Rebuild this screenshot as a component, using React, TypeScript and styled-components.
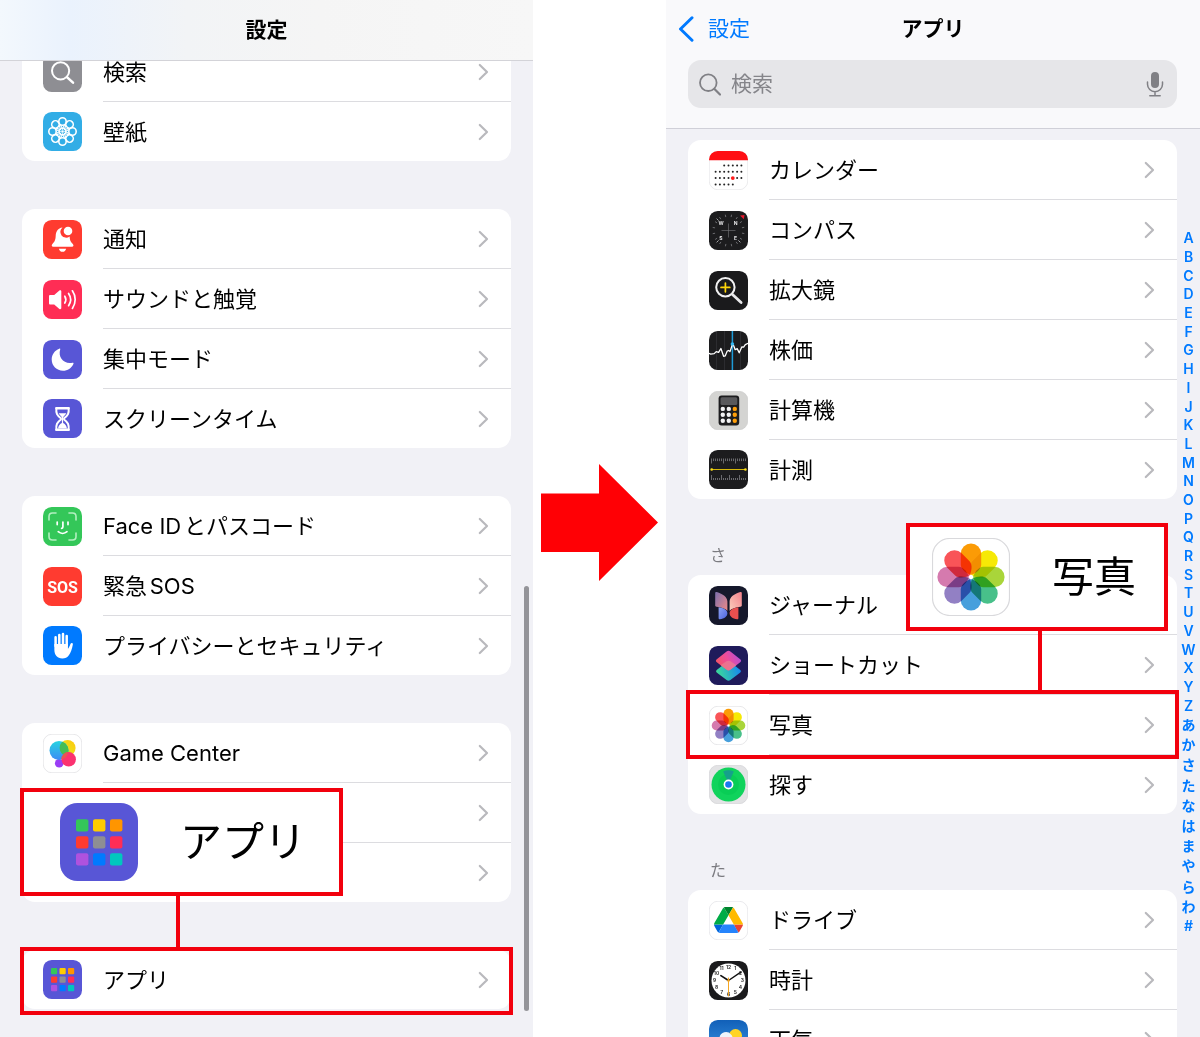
import React from "react";
import styled, { createGlobalStyle, css } from "styled-components";

const GlobalStyle = createGlobalStyle`
  *, *::before, *::after { box-sizing: border-box; }
  body {
    margin: 0;
    background: #fff;
    color: #000;
    font-family: Inter, "Noto Sans CJK JP", sans-serif;
    font-size: 21px;
    line-height: 30px;
  }
  ul, h1, h2 { margin: 0; padding: 0; }
  ul { list-style: none; }
  a { color: inherit; text-decoration: none; }
  button { font: inherit; color: inherit; background: none; border: 0; padding: 0; }
`;

const HIGHLIGHT = "#f2000d";
const BLUE = "#007aff";

/* ---------- layout ---------- */

const Guide = styled.main`
  display: grid;
  grid-template-columns: 533fr 133fr 534fr;
  height: 100vh;
  overflow: hidden;
`;

const Phone = styled.section`
  position: relative;
  display: flex;
  flex-direction: column;
  min-width: 0;
  min-height: 0;
  overflow: hidden;
  background: #f1f1f6;
`;

const Between = styled.div`
  display: flex;
  align-items: center;
  justify-content: center;
  padding-top: 8px;
`;

const TitleBar = styled.header`
  position: relative;
  z-index: 1;
  display: flex;
  flex: none;
  align-items: center;
  justify-content: center;
  height: 61px;
  border-bottom: 1px solid #d3d3d8;
  background: linear-gradient(90deg, #f3f8fd 0, #eaf2fd 13%, #f2f4f6 35%, #f5f5f5 60%, #f7f7f7 100%);
`;

const Title = styled.h1`
  font-size: 21px;
  font-weight: 700;
  line-height: 30px;
  text-align: center;
`;

const NavHeader = styled.header`
  flex: none;
  height: 129px;
  padding-top: 14px;
  border-bottom: 1px solid #d0d0d8;
  background: #f9f9fb;
`;

const NavRow = styled.div`
  display: grid;
  grid-template-columns: 1fr auto 1fr;
  align-items: center;
  height: 30px;
  padding: 0 12px;
`;

const BackButton = styled.button`
  display: flex;
  align-items: center;
  gap: 14px;
  color: ${BLUE};
`;

const SearchBox = styled.label`
  display: flex;
  align-items: center;
  gap: 10px;
  height: 48px;
  margin: 16px 23px 0 22px;
  padding: 0 12px 0 11px;
  border-radius: 13px;
  background: #e6e6e9;
`;

const SearchInput = styled.input`
  flex: 1;
  min-width: 0;
  padding: 0;
  border: 0;
  outline: 0;
  background: transparent;
  font: inherit;
  &::placeholder { color: #85858a; opacity: 1; }
`;

const SettingsBody = styled.div`
  display: flex;
  flex-direction: column;
  gap: 48px;
  margin-top: -19px;
  padding: 0 22px;
`;

const AppsBody = styled.div`
  display: grid;
  grid-template-columns: 1fr 23px;
  align-items: start;
  padding: 11px 0 0 22px;
`;

const Scrollbar = styled.div`
  position: absolute;
  top: 586px;
  right: 4px;
  width: 5px;
  height: 425px;
  border-radius: 3px;
  background: #949499;
`;

/* ---------- lists ---------- */

const Card = styled.ul`
  border-radius: 13px;
  background: #fff;
`;

const SectionTitle = styled.h2`
  height: 76px;
  padding: 46px 22px 0;
  color: #7b7b80;
  font-size: 16px;
  font-weight: 400;
  line-height: 20px;
`;

const Item = styled.li`
  position: relative;
`;

const RowLink = styled.a`
  display: flex;
  align-items: center;
  gap: 21px;
  padding-left: 21px;
`;

const RowMain = styled.span<{ $divided: boolean; $inset: boolean }>`
  display: flex;
  flex: 1;
  align-items: center;
  justify-content: space-between;
  height: ${(p) => (p.$divided ? 60 : 59)}px;
  margin-left: ${(p) => (p.$inset ? 60 : 0)}px;
  padding-right: 22px;
  ${(p) => p.$divided && css`border-bottom: 1px solid #dcdce0;`}
`;

const Label = styled.span`
  font-size: 22px;
  text-autospace: normal;
  white-space: nowrap;
`;

const Svg = styled.svg<{ $size?: number }>`
  display: block;
  flex: none;
  width: ${(p) => p.$size ?? 39}px;
  height: ${(p) => p.$size ?? 39}px;
`;

const Glyph = styled.svg`
  display: block;
  flex: none;
`;

/* ---------- annotations ---------- */

const Highlight = styled.span<{ $shift: number }>`
  position: absolute;
  inset: ${(p) => -p.$shift}px -2px ${(p) => p.$shift - 9}px;
  border: 4px solid ${HIGHLIGHT};
  pointer-events: none;
`;

const Callout = styled.div<{ $side: "left" | "right"; $width: number; $rise: number; $pad: number; $stem: number }>`
  position: absolute;
  z-index: 2;
  bottom: calc(100% + ${(p) => p.$rise}px);
  ${(p) => (p.$side === "left" ? "left: -2px;" : "right: 9px;")}
  display: flex;
  align-items: center;
  gap: 42px;
  width: ${(p) => p.$width}px;
  height: 108px;
  padding-left: ${(p) => p.$pad}px;
  border: 4px solid ${HIGHLIGHT};
  background: #fff;
  font-size: 42px;
  line-height: 60px;
  &::after {
    content: "";
    position: absolute;
    top: calc(100% + 4px);
    left: ${(p) => p.$stem}px;
    width: 4px;
    height: ${(p) => p.$rise - 1}px;
    background: ${HIGHLIGHT};
  }
`;

/* ---------- index ---------- */

const IndexNav = styled.nav`
  margin-top: 89px;
  color: ${BLUE};
  font-size: 14px;
  font-weight: 600;
  line-height: 18px;
  text-align: center;
`;

const IndexGroup = styled.div<{ $height: number }>`
  display: grid;
  grid-auto-rows: 1fr;
  align-items: center;
  height: ${(p) => p.$height}px;
`;

/* ---------- drawings ---------- */

type IconProps = { size?: number };

const Tile = ({ size, fill, border, children }: { size?: number; fill: string; border?: string; children: React.ReactNode }) => (
  <Svg $size={size} viewBox="0 0 39 39" aria-hidden="true">
    <rect x={border ? 0.25 : 0} y={border ? 0.25 : 0} width={border ? 38.5 : 39} height={border ? 38.5 : 39} rx="8.7" fill={fill} stroke={border} strokeWidth={border ? 0.6 : 0} />
    {children}
  </Svg>
);

const SearchTile = () => (
  <Tile fill="#8e8e93">
    <g fill="none" stroke="#fff" strokeLinecap="round">
      <circle cx="17.6" cy="17.8" r="8.6" strokeWidth="2" />
      <path d="M24.2 24.4 30 29.6" strokeWidth="2.6" />
    </g>
  </Tile>
);

const WallpaperTile = () => (
  <Tile fill="#32ade6">
    <g fill="none" stroke="#fff" transform="translate(19.5 19.5)">
      {[0, 45, 90, 135, 180, 225, 270, 315].map((a) => (
        <g key={a} transform={`rotate(${a})`}>
          <circle cy="-10" r="3.7" strokeWidth="1.6" />
          <path d="M-2.200-7 0-2.600 2.200-7" strokeWidth="1.100" />
        </g>
      ))}
      <circle r="3.4" strokeWidth="1" />
      <circle r="1.2" fill="#fff" stroke="none" />
    </g>
  </Tile>
);

const BellTile = () => (
  <Tile fill="#ff3b30">
    <path fill="#fff" d="M19.5 7.4c-4.6.5-6.6 4-6.8 8.4-.2 4.400-1 5.700-3.300 8.200-1.100 1.200-.8 2.800.8 2.800h18.800c1.600 0 1.900-1.600.8-2.800-2.100-2.300-3-3.700-3.200-7.600a5.700 5.700 0 0 1-7.100-9Z" />
    <circle cx="25" cy="11" r="4.300" fill="#fff" />
    <path fill="#fff" d="M15.900 28.700h7.200c-.4 2-1.700 3.100-3.600 3.100s-3.200-1.100-3.600-3.100Z" />
  </Tile>
);

const SoundTile = () => (
  <Tile fill="#ff2d55">
    <path fill="#fff" d="M6 16.200c0-.8.5-1.300 1.300-1.300h3.900l5.200-4.400c.9-.7 1.900-.3 1.900.8v16.800c0 1.100-1 1.500-1.900.8l-5.200-4.400H7.300c-.8 0-1.300-.5-1.300-1.300Z" />
    <g fill="none" stroke="#fff" strokeWidth="1.700" strokeLinecap="round">
      <path d="M21.800 16.200c1.300 2.100 1.300 4.700 0 6.800" />
      <path d="M25.600 13.500c2.500 3.700 2.500 8.500 0 12.200" />
      <path d="M29.400 10.800c3.700 5.300 3.700 12.300 0 17.600" />
    </g>
  </Tile>
);

const MoonTile = () => (
  <Tile fill="#5856d6">
    <path fill="#fff" d="M16.300 8.700c.6-.3 1.200.2.900.9-2.400 7.600 3.400 14.900 12.200 13.200.9-.2 1.400.4 1 1.100C28.500 28 24.600 30.700 20 30.700 13.600 30.700 8.700 25.900 8.700 19.500c0-4.900 3-9.200 7.600-10.800Z" />
  </Tile>
);

const HourglassTile = () => (
  <Tile fill="#5856d6">
    <path fill="none" stroke="#fff" strokeWidth="2" strokeLinejoin="round" d="M13.400 9h12.200c.6 5.500-.7 7.300-4.500 10.300v1.200c3.800 3 5.100 4.900 4.500 10.500H13.400c-.6-5.600.7-7.500 4.500-10.500v-1.200c-3.800-3-5.100-4.800-4.500-10.300Z" />
    <path fill="#fff" d="M15.600 14.300h7.800c-.8 1.600-2.300 2.700-3.300 3.900v5.800c1.900.9 3.400 2.500 3.900 5.500h-9c.5-3 2-4.600 3.900-5.500v-5.800c-1-1.200-2.500-2.300-3.300-3.900Z" />
    <path stroke="#fff" strokeWidth="2.600" strokeLinecap="round" d="M13.500 9.300h12M13.500 30.700h12" />
  </Tile>
);

const FaceTile = () => (
  <Tile fill="#34c759">
    <path fill="none" stroke="#b3f0c1" strokeWidth="1.600" strokeLinecap="round" d="M6 13V9.500C6 7.300 7.300 6 9.500 6H13M26 6h3.500C31.700 6 33 7.300 33 9.500V13M33 26v3.500c0 2.200-1.300 3.500-3.500 3.500H26M13 33H9.500C7.300 33 6 31.700 6 29.500V26" />
    <path fill="none" stroke="#fff" strokeWidth="1.700" strokeLinecap="round" d="M14.200 15v2.600M25 15v2.600M19.900 15v5c0 .9-.5 1.300-1.300 1.300M15.200 24.700c2.500 2.100 6.300 2.100 8.800 0" />
  </Tile>
);

const SosTile = () => (
  <Tile fill="#ff3b30">
    <text x="19.500" y="25.500" textAnchor="middle" fill="#fff" fontFamily="Roboto, sans-serif" fontWeight="700" fontSize="16">SOS</text>
  </Tile>
);

const HandTile = () => (
  <Tile fill="#007aff">
    <path fill="none" stroke="#fff" strokeWidth="2.500" strokeLinecap="round" d="M12.600 20v-8.700M16.300 19V8.900M20 19V8M23.700 19V10" />
    <path fill="#fff" d="M11.350 18h13.600v4.700c.9-.9 1.700-2.600 2.500-4.700.6-1.500 2.700-1.200 2.400.5-.8 4.700-2.200 8.300-4 10.700-1.500 2.100-3.700 3.200-6.500 3.200-5.100 0-8-3.200-8-8.900Z" />
  </Tile>
);

const GameTile = () => (
  <Tile fill="#fff" border="#d9d9dc">
    <defs>
      <linearGradient id="gcBlue" x1="0" y1="0" x2="0" y2="1"><stop offset="0" stopColor="#27d3e0" /><stop offset="1" stopColor="#3b8cf5" /></linearGradient>
      <linearGradient id="gcYellow" x1="1" y1="0" x2="0" y2="1"><stop offset="0" stopColor="#ffc60a" /><stop offset=".5" stopColor="#f0dc19" /><stop offset="1" stopColor="#1fb25a" /></linearGradient>
      <clipPath id="gcClip"><circle cx="16" cy="16.500" r="9.500" /></clipPath>
    </defs>
    <circle cx="16.200" cy="29.300" r="4.300" fill="#9a3df5" />
    <circle cx="24.600" cy="14" r="8" fill="url(#gcYellow)" />
    <circle cx="16" cy="16.500" r="9.500" fill="url(#gcBlue)" />
    <circle cx="24.600" cy="14" r="8" fill="#45bd55" clipPath="url(#gcClip)" />
    <circle cx="25.700" cy="25.300" r="7.200" fill="#fb3270" />
    <circle cx="25.700" cy="25.300" r="7.200" fill="#e8554f" clipPath="url(#gcClip)" />
  </Tile>
);

const APP_COLORS = ["#34c759", "#ffcc00", "#ff9500", "#ff3b30", "#8e8e93", "#ff2d55", "#af52de", "#007aff", "#00c7be"];

const AppsTile = ({ size }: IconProps) => (
  <Tile size={size} fill="#5856d6">
    {APP_COLORS.map((c, i) => (
      <rect key={c} x={8 + (i % 3) * 8.5} y={8.1 + Math.floor(i / 3) * 8.5} width="6.200" height="6.200" rx="1" fill={c} />
    ))}
  </Tile>
);

const CALENDAR_ROWS = [[2, 6], [0, 6], [0, 6], [0, 4]];

const CalendarTile = () => (
  <Tile fill="#fff" border="#dedee0">
    <path fill="#ff0f14" d="M0 9.300V8.700A8.700 8.700 0 0 1 8.700 0h21.600A8.700 8.700 0 0 1 39 8.700v.6Z" />
    {CALENDAR_ROWS.map(([from, to], r) =>
      Array.from({ length: to - from + 1 }, (_, i) => from + i).map((c) => {
        const today = r === 2 && c === 4;
        return <circle key={`${r}-${c}`} cx={6.6 + c * 4.3} cy={14.5 + r * 6.3} r={today ? 1.9 : 1} fill={today ? "#ff1a1a" : "#222"} />;
      })
    )}
  </Tile>
);

const CompassTile = () => (
  <Tile fill="#1c1c1e">
    <g stroke="#77777b" strokeWidth=".8">
      {Array.from({ length: 16 }, (_, i) => (
        <path key={i} transform={`rotate(${i * 22.5 + 11} 19.500 19.500)`} d="M19.500 3.400v2.400" />
      ))}
      <path d="M19.500 12.500v14M12.500 19.500h14" strokeWidth=".6" />
    </g>
    <g stroke="#c9c9cc" strokeWidth=".8"><path d="m7.600 7.600 2 2M7.600 31.400l2-2M31.400 31.400l-2-2" /></g>
    <path fill="#e8182c" d="m35.500 4-.7 4.300-3.700-3.700Z" />
    <g fill="#e5e5e7" fontFamily="Inter, sans-serif" fontWeight="700" fontSize="5" textAnchor="middle">
      <text x="12.200" y="14.300">W</text>
      <text x="26.600" y="14.300">N</text>
      <text x="12" y="29">S</text>
      <text x="26.600" y="29">E</text>
    </g>
  </Tile>
);

const MagnifierTile = () => (
  <Tile fill="#1a1a1c">
    <g fill="none" strokeLinecap="round">
      <circle cx="16.400" cy="16.300" r="9.200" stroke="#f2f2f3" strokeWidth="2" />
      <path d="m23.500 23.500 8.600 8" stroke="#e8e8ea" strokeWidth="2.800" />
      <path d="M16.400 12v8.800M12 16.400h8.800" stroke="#ffd60a" strokeWidth="1.700" />
    </g>
  </Tile>
);

const StocksTile = () => (
  <Tile fill="#1c1c1e">
    <path stroke="#313135" strokeWidth=".8" d="M7.500 1v37M15.500 0v39M31.500 1v37" />
    <path stroke="#1e9bd7" strokeWidth="1.500" d="M23.400 0v39" />
    <path fill="none" stroke="#fff" strokeWidth="1.300" strokeLinejoin="round" d="m0 22.300 1.700.8 3.500-.5 2-2 2.400.8 2.300-3.900.8 2.300 1.900 5.500 1.600-.4 2-4.800 1.500-.6 1.300 1.100 2.300-6.900 1.300.8 1.600 4.200 2-1.100 2 4.200 2.700-6 1.700.4 1.700-2.600 2.700-1.300" />
    <circle cx="23.400" cy="13" r="1.800" fill="#35b8f0" />
  </Tile>
);

const CalculatorTile = () => (
  <Tile fill="#d4d4d2" border="#c9c9c9">
    <rect x="9.600" y="4.500" width="20.600" height="30" rx="3" fill="#1d1d1f" />
    <rect x="11.500" y="6.300" width="16.800" height="7.800" rx="1.500" fill="#59595c" />
    {Array.from({ length: 9 }, (_, i) => (
      <circle key={i} cx={13.8 + (i % 3) * 6} cy={17.9 + Math.floor(i / 3) * 5.9} r="2.200" fill={i % 3 === 2 ? "#ff9f0a" : "#f2f2f4"} />
    ))}
  </Tile>
);

const MeasureTile = () => (
  <Tile fill="#1c1c1e">
    <g stroke="#8d8d91" strokeWidth=".7">
      {Array.from({ length: 18 }, (_, i) => (
        <path key={i} d={`M${2.5 + i * 2} 8.500v${i % 6 === 0 ? 5 : 2.6}M${2.5 + i * 2} 30v${i % 9 === 0 || i % 9 === 5 ? -5 : -2}`} />
      ))}
    </g>
    <path stroke="#d6b80a" strokeWidth="1" d="M2.500 19.500h34" />
    <circle cx="2.700" cy="19.500" r="1.300" fill="#ffe11a" />
    <circle cx="36.400" cy="19.500" r="1.300" fill="#ffe11a" />
  </Tile>
);

const JournalTile = () => (
  <Tile fill="#15182b">
    <defs>
      <linearGradient id="jA" x1="0" y1="0" x2="1" y2="1"><stop offset="0" stopColor="#7a6fae" /><stop offset="1" stopColor="#f08a86" /></linearGradient>
      <linearGradient id="jB" x1="1" y1="0" x2="0" y2="1"><stop offset="0" stopColor="#f3808a" /><stop offset="1" stopColor="#fbd0bd" /></linearGradient>
      <linearGradient id="jC" x1="0" y1="0" x2="1" y2="1"><stop offset="0" stopColor="#8fa4f2" /><stop offset="1" stopColor="#4a63e0" /></linearGradient>
    </defs>
    <path fill="url(#jA)" d="M6.200 7c0-.8.7-1.300 1.500-1C14 8 18.300 11 18.400 15.500v9.300C16.500 22.500 12.500 21.500 7.500 20.800c-.8-.1-1.300-.5-1.300-1.200Z" />
    <path fill="url(#jB)" d="M32.800 7c0-.8-.7-1.300-1.500-1C25 8 20.700 11 20.600 15.500v9.300c1.900-2.300 5.900-3.300 10.900-4 .8-.1 1.300-.5 1.300-1.200Z" />
    <path fill="url(#jC)" d="M9.600 21.300c5 .8 8.800 2.400 8.800 6 0 3-2.900 5.500-7.500 6-.8.1-1.300-.4-1.300-1.200Z" />
    <path fill="#e9504f" d="M29.400 21.300c-5 .8-8.800 2.400-8.800 6 0 3 2.900 5.500 7.500 6 .8.1 1.300-.4 1.300-1.200Z" />
  </Tile>
);

const ShortcutsTile = () => (
  <Tile fill="#1f1b5b">
    <defs>
      <linearGradient id="scTop" x1="0" y1=".7" x2="1" y2=".3"><stop offset="0" stopColor="#f5555f" /><stop offset=".5" stopColor="#ee4c9a" /><stop offset="1" stopColor="#b44fd8" /></linearGradient>
      <linearGradient id="scLow" x1="0" y1=".6" x2="1" y2=".4"><stop offset="0" stopColor="#3ddc97" /><stop offset="1" stopColor="#1587f0" /></linearGradient>
    </defs>
    <path fill="url(#scLow)" d="m17.600 16.200-9.600 7.600c-1.200 1-1.200 2 0 3l9.600 7.300c1.300.9 2.500.9 3.800 0L31 26.800c1.200-1 1.200-2 0-3l-9.600-7.600c-1.300-.9-2.500-.9-3.800 0Z" />
    <path fill="url(#scTop)" d="m17.600 5.500-9.800 7.800c-1.200 1-1.200 2 0 3l9.800 7.500c1.300.9 2.500.9 3.800 0l9.800-7.500c1.200-1 1.200-2 0-3l-9.800-7.800c-1.300-.9-2.500-.9-3.800 0Z" />
    <path fill="#e98a92" opacity=".6" d="m11.600 19.200 5.900-3.900c1.300-.9 2.700-.9 4 0l5.900 3.900-6 4.600c-1.300.9-2.500.9-3.800 0Z" />
  </Tile>
);

const PETALS = ["#fb9b06", "#f6e906", "#a9d53a", "#48c08a", "#479fdc", "#9280c4", "#d57aae", "#f95458"];

const Petals = styled.g`
  isolation: isolate;
  path { mix-blend-mode: multiply; }
`;

const PhotosTile = ({ size }: IconProps) => (
  <Tile size={size} fill="#fff" border="#d9d9dc">
    <Petals transform="translate(19.500 19.500)">
      {PETALS.map((c, i) => (
        <path key={c} fill={c} transform={`rotate(${i * 45})`} d="M-5.100-11.700a5.100 5.100 0 0 1 10.200 0v5.600C5.100-3.800 2-1.600 0-1-2-1.600-5.100-3.800-5.100-6.100Z" />
      ))}
    </Petals>
  </Tile>
);

const FindTile = () => (
  <Tile fill="#e3e3e5" border="#cfcfd2">
    <circle cx="19.500" cy="19.500" r="17" fill="#10d35c" />
    <circle cx="19.500" cy="19.500" r="10.500" fill="#09cd56" />
    <path fill="#16a08b" d="m19.500 18.500-5.300-12c3-1.700 7.600-1.700 10.600 0Z" />
    <circle cx="19.500" cy="19.500" r="4.900" fill="#fff" />
    <circle cx="19.500" cy="19.500" r="3.300" fill="#1a78f0" />
  </Tile>
);

const DriveTile = () => (
  <Tile fill="#fff" border="#dcdce0">
    <g transform="translate(5 6) scale(.332)">
      <path fill="#0066da" d="m6.600 66.850 3.850 6.650c.8 1.400 1.950 2.500 3.300 3.300l13.750-23.800h-27.500c0 1.550.4 3.100 1.200 4.500z" />
      <path fill="#00ac47" d="m43.650 25-13.750-23.800c-1.350.8-2.500 1.900-3.300 3.300l-25.400 44a9.060 9.060 0 0 0 -1.200 4.500h27.500z" />
      <path fill="#ea4335" d="m73.550 76.800c1.350-.8 2.500-1.900 3.300-3.300l1.600-2.750 7.650-13.250c.8-1.400 1.200-2.950 1.200-4.500h-27.502l5.852 11.500z" />
      <path fill="#00832d" d="m43.650 25 13.750-23.800c-1.350-.8-2.900-1.200-4.500-1.200h-18.500c-1.600 0-3.150.45-4.500 1.200z" />
      <path fill="#2684fc" d="m59.800 53h-32.300l-13.750 23.800c1.350.8 2.900 1.200 4.500 1.200h50.800c1.600 0 3.150-.45 4.500-1.200z" />
      <path fill="#ffba00" d="m73.400 26.500-12.700-22c-.8-1.400-1.950-2.500-3.300-3.300l-13.750 23.800 16.150 28h27.450c0-1.550-.4-3.100-1.200-4.500z" />
    </g>
  </Tile>
);

const ClockTile = () => (
  <Tile fill="#1a1a1c">
    <circle cx="19.500" cy="19.500" r="17" fill="#fff" />
    <g fill="#222" fontFamily="Inter, sans-serif" fontWeight="600" fontSize="5" textAnchor="middle">
      {Array.from({ length: 12 }, (_, i) => {
        const a = ((i + 1) * Math.PI) / 6;
        return <text key={i} x={19.5 + 13.8 * Math.sin(a)} y={21.3 - 13.8 * Math.cos(a)}>{i + 1}</text>;
      })}
    </g>
    <g strokeLinecap="round">
      <path stroke="#111" strokeWidth="1.700" d="m19.500 19.500-7.600-4.900" />
      <path stroke="#111" strokeWidth="1.400" d="m19.500 19.500 12.300-8.300" />
      <path stroke="#f5a623" strokeWidth="1" d="M19.500 17v18" />
    </g>
    <circle cx="19.500" cy="19.500" r="1.300" fill="#f5a623" />
  </Tile>
);

const WeatherTile = () => (
  <Tile fill="url(#sky)">
    <defs>
      <linearGradient id="sky" x1="0" y1="0" x2="0" y2="1"><stop offset="0" stopColor="#1160b8" /><stop offset="1" stopColor="#3f9bea" /></linearGradient>
    </defs>
    <circle cx="26.500" cy="15.500" r="6.500" fill="#ffd426" />
    <path fill="#eef4fb" d="M12 29.500a6 6 0 0 1-1.500-11.800A6.500 6.500 0 0 1 22 14.500c1 1 1.600 2.100 1.900 4.500a5.300 5.300 0 0 1 1.100 10.500Z" />
  </Tile>
);

const Chevron = () => (
  <Glyph width="11" height="18" viewBox="0 0 11 18" aria-hidden="true">
    <path d="m1.800 2 7.200 7-7.200 7" fill="none" stroke="#b9b9bd" strokeWidth="2.200" strokeLinecap="round" strokeLinejoin="round" />
  </Glyph>
);

/* ---------- page ---------- */

type Entry = { label?: string; icon?: React.ReactNode; note?: React.ReactNode };

const List = ({ items }: { items: Entry[] }) => (
  <Card>
    {items.map((item, i) => (
      <Item key={i}>
        <RowLink href="#">
          {item.icon}
          <RowMain $divided={i < items.length - 1} $inset={!item.icon}>
            <Label>{item.label}</Label>
            <Chevron />
          </RowMain>
        </RowLink>
        {item.note}
      </Item>
    ))}
  </Card>
);

const settings: Entry[][] = [
  [
    { label: "検索", icon: <SearchTile /> },
    { label: "壁紙", icon: <WallpaperTile /> },
  ],
  [
    { label: "通知", icon: <BellTile /> },
    { label: "サウンドと触覚", icon: <SoundTile /> },
    { label: "集中モード", icon: <MoonTile /> },
    { label: "スクリーンタイム", icon: <HourglassTile /> },
  ],
  [
    { label: "Face IDとパスコード", icon: <FaceTile /> },
    { label: "緊急SOS", icon: <SosTile /> },
    { label: "プライバシーとセキュリティ", icon: <HandTile /> },
  ],
  [{ label: "Game Center", icon: <GameTile /> }, {}, {}],
  [
    {
      label: "アプリ",
      icon: <AppsTile />,
      note: (
        <>
          <Highlight $shift={3} />
          <Callout $side="left" $width={323} $rise={54} $pad={36} $stem={152}>
            <AppsTile size={78} />
            <span>アプリ</span>
          </Callout>
        </>
      ),
    },
  ],
];

const appsKa: Entry[] = [
  { label: "カレンダー", icon: <CalendarTile /> },
  { label: "コンパス", icon: <CompassTile /> },
  { label: "拡大鏡", icon: <MagnifierTile /> },
  { label: "株価", icon: <StocksTile /> },
  { label: "計算機", icon: <CalculatorTile /> },
  { label: "計測", icon: <MeasureTile /> },
];

const appsSa: Entry[] = [
  { label: "ジャーナル", icon: <JournalTile /> },
  { label: "ショートカット", icon: <ShortcutsTile /> },
  {
    label: "写真",
    icon: <PhotosTile />,
    note: (
      <>
        <Highlight $shift={5} />
        <Callout $side="right" $width={262} $rise={64} $pad={22} $stem={128}>
          <PhotosTile size={78} />
          <span>写真</span>
        </Callout>
      </>
    ),
  },
  { label: "探す", icon: <FindTile /> },
];

const appsTa: Entry[] = [
  { label: "ドライブ", icon: <DriveTile /> },
  { label: "時計", icon: <ClockTile /> },
  { label: "天気", icon: <WeatherTile /> },
];

const LATIN = [..."ABCDEFGHIJKLMNOPQRSTUVWXYZ"];
const KANA = [..."あかさたなはまやらわ"];

const IndexLinks = ({ letters, height }: { letters: string[]; height: number }) => (
  <IndexGroup $height={height}>
    {letters.map((l) => (
      <a key={l} href="#">{l}</a>
    ))}
  </IndexGroup>
);

export default function App() {
  return (
    <>
      <GlobalStyle />
      <Guide>
        <Phone>
          <TitleBar>
            <Title>設定</Title>
          </TitleBar>
          <SettingsBody>
            {settings.map((items, i) => (
              <List key={i} items={items} />
            ))}
          </SettingsBody>
          <Scrollbar />
        </Phone>

        <Between>
          <Glyph width="117" height="117" viewBox="0 0 117 117" aria-hidden="true">
            <path fill="#ff0005" d="M0 29.500h58V0l59 58.500L58 117V88H0Z" />
          </Glyph>
        </Between>

        <Phone>
          <NavHeader>
            <NavRow>
              <BackButton type="button">
                <Glyph width="16" height="26" viewBox="0 0 16 26" aria-hidden="true">
                  <path d="M14 1.800 2.500 13 14 24.200" fill="none" stroke={BLUE} strokeWidth="3" strokeLinecap="round" strokeLinejoin="round" />
                </Glyph>
                設定
              </BackButton>
              <Title>アプリ</Title>
            </NavRow>
            <SearchBox>
              <Glyph width="22" height="23" viewBox="0 0 22 23" aria-hidden="true">
                <g fill="none" stroke="#808085" strokeLinecap="round">
                  <circle cx="9.300" cy="9.700" r="8.300" strokeWidth="1.800" />
                  <path d="m15.500 16 5.500 5.500" strokeWidth="2.200" />
                </g>
              </Glyph>
              <SearchInput type="text" placeholder="検索" />
              <Glyph width="20" height="26" viewBox="0 0 20 26" aria-hidden="true">
                <rect x="6" y="1" width="8" height="16" rx="4" fill="#808085" />
                <path d="M2.500 11v2.200a7.500 7.500 0 0 0 15 0V11M10 20.800v3.700M4.800 24.700h10.400" fill="none" stroke="#808085" strokeWidth="1.500" strokeLinecap="round" />
              </Glyph>
            </SearchBox>
          </NavHeader>
          <AppsBody>
            <div>
              <List items={appsKa} />
              <SectionTitle>さ</SectionTitle>
              <List items={appsSa} />
              <SectionTitle>た</SectionTitle>
              <List items={appsTa} />
            </div>
            <IndexNav>
              <IndexLinks letters={LATIN} height={486} />
              <IndexLinks letters={KANA} height={202} />
              <a href="#">#</a>
            </IndexNav>
          </AppsBody>
        </Phone>
      </Guide>
    </>
  );
}
